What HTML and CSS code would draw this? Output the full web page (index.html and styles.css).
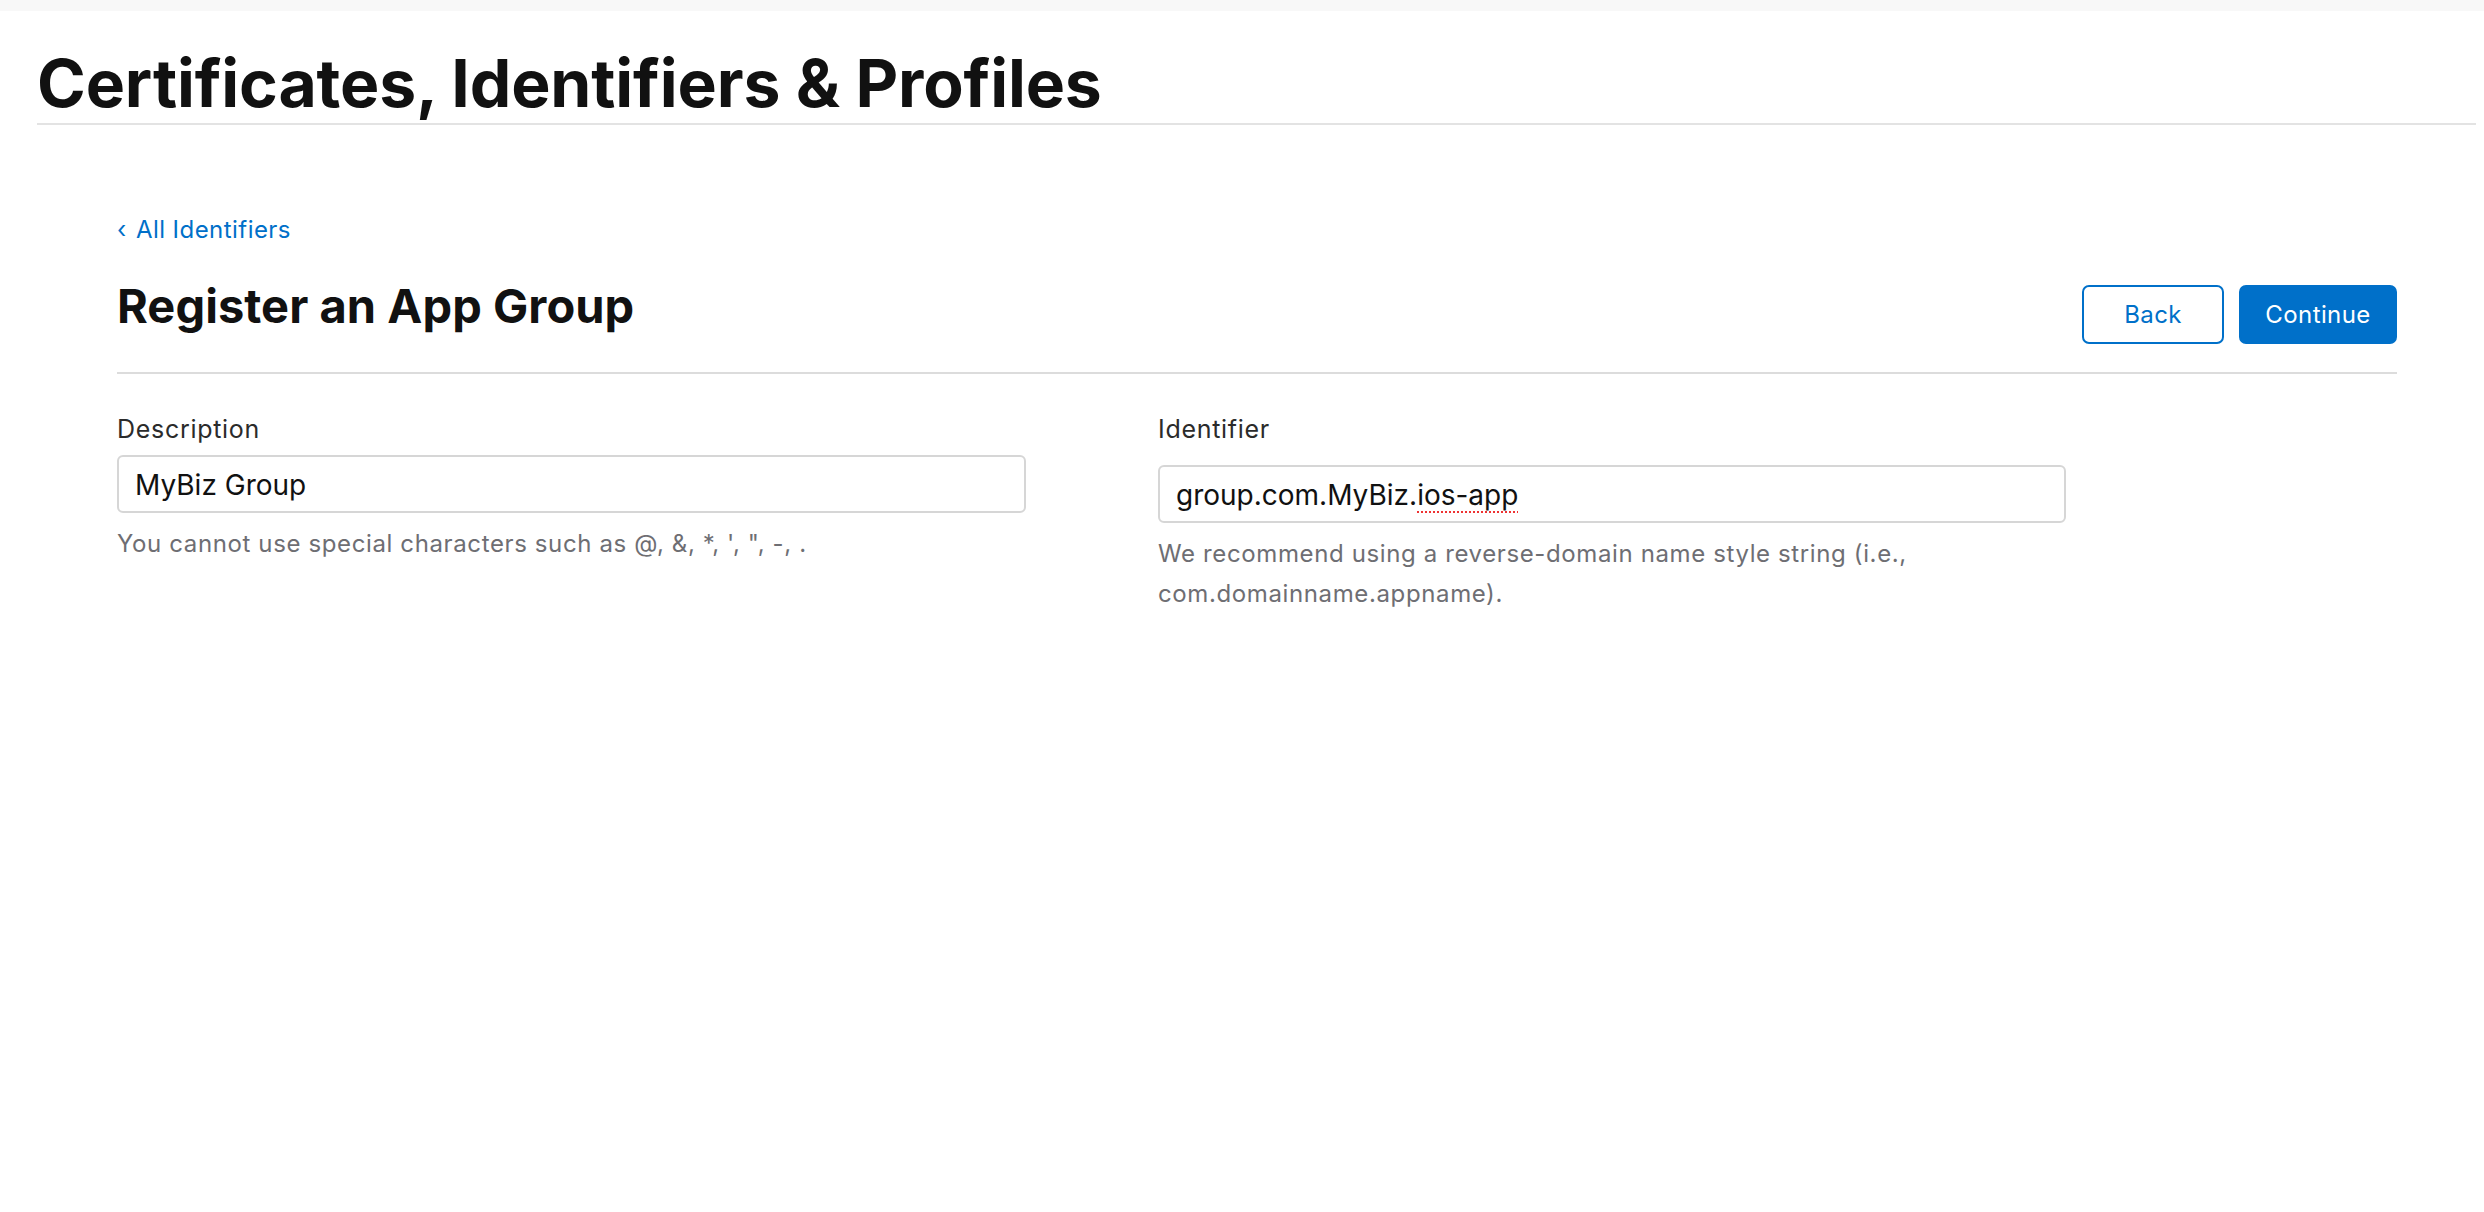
FILE: index.html
```html
<!DOCTYPE html>
<html lang="en">
<head>
<meta charset="utf-8">
<title>Register an App Group</title>
<link rel="stylesheet" href="styles.css">
</head>
<body>
<div class="topbar"></div>
<header class="page-header">
  <h1 class="page-title">Certificates, Identifiers &amp; Profiles</h1>
</header>
<main class="content">
  <a class="back-link" href="#"><span class="chev">‹</span> All Identifiers</a>
  <div class="title-row">
    <h2 class="form-title">Register an App Group</h2>
    <div class="actions">
      <button class="btn btn-secondary">Back</button>
      <button class="btn btn-primary">Continue</button>
    </div>
  </div>
  <div class="fields">
    <div class="field">
      <label class="field-label">Description</label>
      <div class="input">MyBiz Group</div>
      <p class="help">You cannot use special characters such as @, &amp;, *, ', ", -, .</p>
    </div>
    <div class="field field-right">
      <label class="field-label">Identifier</label>
      <div class="input">group.com.MyBiz.<span class="misspelled">ios-app</span></div>
      <p class="help">We recommend using a reverse-domain name style string (i.e., com.domainname.appname).</p>
    </div>
  </div>
</main>
</body>
</html>
```
FILE: styles.css
```css
* { box-sizing: border-box; }
html, body { margin: 0; padding: 0; background: #fff; }
body {
  font-family: Inter, "Noto Sans", "Liberation Sans", sans-serif;
  color: #1d1d1f;
}
.topbar { height: 11px; background: #f8f8f8; }
.page-header {
  margin: 0 8px 0 37px;
  padding-top: 39px;
  padding-bottom: 7px;
  border-bottom: 2px solid #e3e3e3;
}
.page-title {
  margin: 0;
  font-size: 66px;
  line-height: 66px;
  font-weight: 700;
  color: #111;
  letter-spacing: -0.14px;
}
.content {
  width: 2280px;
  margin-left: 117px;
  padding-top: 90px;
}
.back-link {
  display: block;
  font-size: 24px;
  line-height: 30px;
  letter-spacing: 0.45px;
  color: #0070c9;
  text-decoration: none;
}
.chev { display: inline-block; margin-right: 2px; }
.title-row {
  margin-top: 33px;
  display: flex;
  justify-content: space-between;
  align-items: flex-start;
  padding-bottom: 28px;
  border-bottom: 2px solid #dcdcdc;
}
.form-title {
  margin: 0;
  font-size: 47px;
  line-height: 56px;
  font-weight: 700;
  color: #111;
  letter-spacing: 0.05px;
}
.actions { display: flex; gap: 15px; margin-top: 7px; }
.btn {
  height: 59px;
  border-radius: 7px;
  font-family: inherit;
  font-size: 24px;
  letter-spacing: 0.4px;
  padding: 0 24px;
  cursor: pointer;
}
.btn-secondary {
  min-width: 142px;
  background: #fff;
  color: #0070c9;
  border: 2px solid #0070c9;
}
.btn-primary {
  min-width: 158px;
  background: #0070c9;
  color: #fff;
  border: 2px solid #0070c9;
}
.fields {
  display: grid;
  grid-template-columns: 909px 908px;
  column-gap: 132px;
  margin-top: 40px;
}
.field-label {
  display: block;
  font-size: 25px;
  line-height: 30px;
  font-weight: 400;
  letter-spacing: 0.7px;
  color: #2b2b2b;
}
.input {
  margin-top: 11px;
  height: 58px;
  border: 2px solid #d6d6d6;
  border-radius: 6px;
  padding: 2px 16px 0;
  display: flex;
  align-items: center;
  font-size: 28px;
  color: #111;
}
.field-right .input { margin-top: 21px; }
.misspelled {
  text-decoration: underline dotted #e33;
  text-decoration-thickness: 2px;
  text-underline-offset: 6px;
}
.help {
  margin: 11px 0 0;
  font-size: 24px;
  line-height: 40px;
  letter-spacing: 0.62px;
  color: #6e6e73;
}
```
